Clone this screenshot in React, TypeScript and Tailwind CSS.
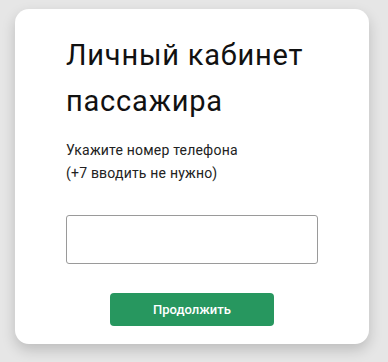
export default function App() {
  return (
    <div
      className="min-h-screen w-full bg-[#e6e6e6] pt-[9px] pl-[15px]"
      style={{ fontFamily: "Roboto, 'Noto Sans', sans-serif" }}
    >
      <div className="w-[354px] h-[335px] rounded-[14px] bg-white shadow-[0_6px_14px_rgba(0,0,0,0.18)] pl-[51px] pr-[40px] pt-[23px]">
        <h1 className="text-[29px] leading-[46px] tracking-[0.8px] font-normal text-[#111]">
          Личный кабинет пассажира
        </h1>
        <p className="mt-[15px] text-[14px] leading-[23px] tracking-[0.2px] text-[#222]">
          Укажите номер телефона
          <br />
          (+7 вводить не нужно)
        </p>
        <input
          type="tel"
          className="mt-[30px] block w-[252px] h-[49px] rounded-[3px] border border-[#9a9a9a] bg-white outline-none"
        />
        <button className="mt-[29px] ml-[44px] block w-[164px] h-[33px] rounded-[4px] bg-[#27975f] text-white text-[13px] font-medium">
          Продолжить
        </button>
      </div>
    </div>
  );
}
